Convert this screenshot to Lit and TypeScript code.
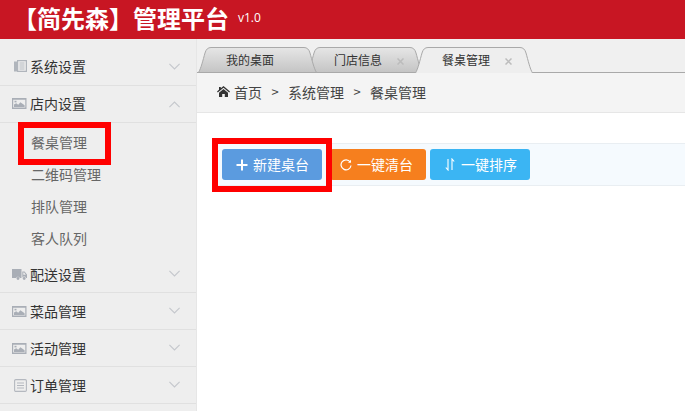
import { LitElement, html, css, svg } from "lit";
import { customElement } from "lit/decorators.js";

const chevDown = html`<svg class="chev" width="11" height="7" viewBox="0 0 11 7"><path d="M.4.8 5.500 6l5.100-5.200" fill="none" stroke="#c4c7cc" stroke-width="1.100"/></svg>`;
const chevUp = html`<svg class="chev up" width="11" height="7" viewBox="0 0 11 7"><path d="M.4 6.200 5.500 1l5.100 5.200" fill="none" stroke="#c4c7cc" stroke-width="1.100"/></svg>`;
const picture = html`<svg class="ico" width="15" height="11" viewBox="0 0 15 11"><path fill-rule="evenodd" fill="#a9aeb6" d="M0 0h14.500v11H0zM1.200 1.800v7.600h12.100V1.800z"/><path fill="#a9aeb6" d="M2 9V6.500l2.200-1.300 2 1.500 2.200-2.400 4.200 2.900V9z"/><rect x="2.500" y="2.800" width="2" height="1.600" fill="#a9aeb6"/></svg>`;
const book = html`<svg class="ico" width="13" height="12" viewBox="0 0 13 12"><path fill-rule="evenodd" fill="#b0b5bc" d="M3 0h10v12H3zM4.200 1.200v9.600h7.600V1.200z"/><rect y="1.500" width="3" height="10" fill="#b0b5bc"/><path d="M5.500 3h5M5.500 5h5M5.500 7h5M5.500 9h5" stroke="#b0b5bc" stroke-width=".9"/></svg>`;
const truck = html`<svg class="ico" width="15" height="11" viewBox="0 0 15 11"><path fill="#a9aeb6" d="M0 0h9.500v9H7.800a1.900 1.900 0 0 0-3.600 0H0z"/><path fill-rule="evenodd" fill="#a9aeb6" d="M10.300 2.500h2.300L15 5.500V9h-1a1.900 1.900 0 0 0-3.700 0zM11.300 3.500v2.200h2.500L12.200 3.500z"/><circle cx="6" cy="9.500" r="1.400" fill="#a9aeb6"/><circle cx="12.200" cy="9.500" r="1.400" fill="#a9aeb6"/></svg>`;
const listing = html`<svg class="ico" width="13" height="13" viewBox="0 0 13 13"><rect x=".6" y=".6" width="11.800" height="11.800" rx="1.200" fill="none" stroke="#b4b8bf" stroke-width="1.100"/><path d="M3 4h7M3 6.500h7M3 9h7" stroke="#b4b8bf" stroke-width="1"/></svg>`;
const closeX = html`<svg class="x" width="7" height="7" viewBox="0 0 7 7"><path d="M.5.500l6 6M6.500.500l-6 6" stroke="#bcbcbc" stroke-width="1.500"/></svg>`;

const tabShape = (w: number, active: boolean) => {
  const y = active ? 26 : 25.5;
  return svg`
  <path d="M.5 ${y} C3 ${y - 4} 5 13 7 6 Q8.500 .5 13 .5 H${w - 13} Q${w - 8.5} .5 ${w - 7} 6 C${w - 5} 13 ${w - 3} ${y - 4} ${w - 0.5} ${y} ${active ? "" : "Z"}"
    fill="${active ? "#eeeeee" : "url(#tabg)"}" stroke="#a9a9a9" stroke-width="1"/>`;
};

@customElement("app-root")
export class AppRoot extends LitElement {
  static styles = css`
    :host {
      display: block;
      width: 685px;
      height: 411px;
      overflow: hidden;
      background: #fff;
      font-family: "Noto Sans CJK SC", "Liberation Sans", sans-serif;
      color: #333;
      position: relative;
    }
    .header {
      height: 39px;
      background: #c81623;
      color: #fff;
      display: flex;
      align-items: center;
      padding-left: 13px;
      gap: 9px;
    }
    .brand { font-size: 24px; font-weight: 700; line-height: 39px; margin-top: -4px; }
    .ver { font-size: 12px; font-family: "Open Sans", "Liberation Sans", sans-serif; margin-top: -5px; }
    .body { display: flex; height: 372px; }
    .side {
      width: 196px;
      flex: none;
      background: #eee;
      border-right: 1px solid #e6e6e6;
      padding-top: 10px;
    }
    .item {
      height: 36px;
      border-bottom: 1px solid #e0e0e0;
      display: flex;
      align-items: center;
      font-size: 14px;
      color: #333;
      position: relative;
    }
    .item.raised span { margin-top: -2px; }
    .icocell { width: 30px; display: flex; justify-content: flex-end; padding-right: 3px; box-sizing: border-box; }
    .item.raised .icocell { margin-top: -2px; }
    .chev { position: absolute; left: 169px; top: 14px; }
    .chev.up { top: 15px; }
    .sub { padding: 3px 0 2px; }
    .subitem { height: 32px; line-height: 32px; padding-left: 31px; font-size: 14px; color: #666; }
    .main { flex: 1; min-width: 0; background: #fff; }
    .tabbar {
      height: 34px;
      background: #f0f0f0;
      box-sizing: border-box;
      padding: 8px 0 0 1px;
      display: flex;
      border-bottom: 1px solid #a9a9a9;
    }
    .tab {
      position: relative;
      height: 26px;
      font-size: 12px;
      color: #333;
      display: flex;
      align-items: center;
      flex: none;
      box-sizing: border-box;
      padding-left: 27px;
    }
    .tab svg.shape { position: absolute; left: 0; top: 0; }
    .tab span { position: relative; margin-top: -2px; }
    .t1 { width: 119px; padding-left: 28px; z-index: 2; }
    .t2 { width: 116px; margin-left: -10px; z-index: 1; }
    .t3 { width: 118px; margin-left: -8px; z-index: 2; height: 27px; }
    .x { position: absolute; top: 11px; left: 90px; }
    .crumb {
      height: 40px;
      background: #f4f4f4;
      border-bottom: 1px solid #e6e6e6;
      display: flex;
      align-items: center;
      font-size: 14px;
      color: #444;
      padding-left: 20px;
      box-sizing: border-box;
    }
    .crumb span { margin-top: -2px; }
    .crumb .home { margin-right: 4px; margin-top: -2px; }
    .crumb .sep { width: 26px; text-align: center; font-size: 13px; }
    .content { padding: 30px 0 0 15px; }
    .toolbar {
      height: 43px;
      background: #f5fafe;
      border-top: 1px solid #e9eef2;
      border-bottom: 1px solid #e9eef2;
      box-sizing: border-box;
      display: flex;
      align-items: center;
      padding-left: 10px;
      gap: 4px;
    }
    .btn {
      height: 31px;
      border-radius: 3px;
      color: #fff;
      font-size: 14px;
      display: flex;
      align-items: center;
      box-sizing: border-box;
    }
    .btn span { margin-top: -2px; }
    .b1 { width: 100px; background: #5b9bdf; margin-right: 4px; padding-left: 14px; gap: 5px; }
    .b2 { width: 96px; background: #f67f1e; padding-left: 10px; gap: 5px; }
    .b3 { width: 100px; background: #3bb5f3; padding-left: 15px; gap: 6px; }
    .mark { position: absolute; border: 6px solid #f00; box-sizing: border-box; pointer-events: none; }
    .m1 { left: 18px; top: 122px; width: 93px; height: 43px; }
    .m2 { left: 212px; top: 138px; width: 120px; height: 54px; }
  `;

  private renderItem(icon: unknown, label: string, open = false, raised = false) {
    return html`<div class="item ${raised ? "raised" : ""}"><div class="icocell">${icon}</div><span>${label}</span>${open ? chevUp : chevDown}</div>`;
  }

  render() {
    return html`
      <div class="header"><span class="brand">【简先森】管理平台</span><span class="ver">v1.0</span></div>
      <div class="body">
        <aside class="side">
          ${this.renderItem(book, "系统设置", false, true)}
          ${this.renderItem(picture, "店内设置", true, true)}
          <div class="sub">
            ${["餐桌管理", "二维码管理", "排队管理", "客人队列"].map((s) => html`<div class="subitem">${s}</div>`)}
          </div>
          ${this.renderItem(truck, "配送设置")}
          ${this.renderItem(picture, "菜品管理")}
          ${this.renderItem(picture, "活动管理")}
          ${this.renderItem(listing, "订单管理")}
        </aside>
        <main class="main">
          <div class="tabbar">
            <div class="tab t1"><svg class="shape" width="119" height="26"><defs><linearGradient id="tabg" x1="0" y1="0" x2="0" y2="1"><stop offset="0" stop-color="#e6e6e6"/><stop offset="1" stop-color="#c4c4c4"/></linearGradient></defs>${tabShape(119, false)}</svg><span>我的桌面</span></div>
            <div class="tab t2"><svg class="shape" width="116" height="26">${tabShape(116, false)}</svg><span>门店信息</span>${closeX}</div>
            <div class="tab t3"><svg class="shape" width="118" height="27">${tabShape(118, true)}</svg><span>餐桌管理</span>${closeX}</div>
          </div>
          <div class="crumb">
            <svg class="home" width="13" height="11" viewBox="0 0 13 11"><path fill="#333" d="M6.500 0 13 5.500l-.8.9L6.500 1.700.8 6.400 0 5.500 2 3.800V1h1.800v1.300zM2 6.800l4.500-3.700L11 6.800V11H7.800V8H5.200v3H2z"/></svg>
            <span>首页</span><span class="sep">&gt;</span><span>系统管理</span><span class="sep">&gt;</span><span>餐桌管理</span>
          </div>
          <div class="content">
            <div class="toolbar">
              <div class="btn b1"><svg width="12" height="12" viewBox="0 0 12 12"><path d="M6 .5v11M.5 6h11" stroke="#fff" stroke-width="2"/></svg><span>新建桌台</span></div>
              <div class="btn b2"><svg width="12" height="12" viewBox="0 0 12 12"><path d="M10.200 3A5 5 0 1 0 11 6.500" fill="none" stroke="#fff" stroke-width="1.200"/><path d="M11 .8v3H8z" fill="#fff"/></svg><span>一键清台</span></div>
              <div class="btn b3"><svg width="10" height="13" viewBox="0 0 10 13"><path d="M3 1v11L.8 9.500M7 12V1l2.200 2.500" fill="none" stroke="#fff" stroke-width="1.100"/></svg><span>一键排序</span></div>
            </div>
          </div>
        </main>
      </div>
      <div class="mark m1"></div>
      <div class="mark m2"></div>
    `;
  }
}
